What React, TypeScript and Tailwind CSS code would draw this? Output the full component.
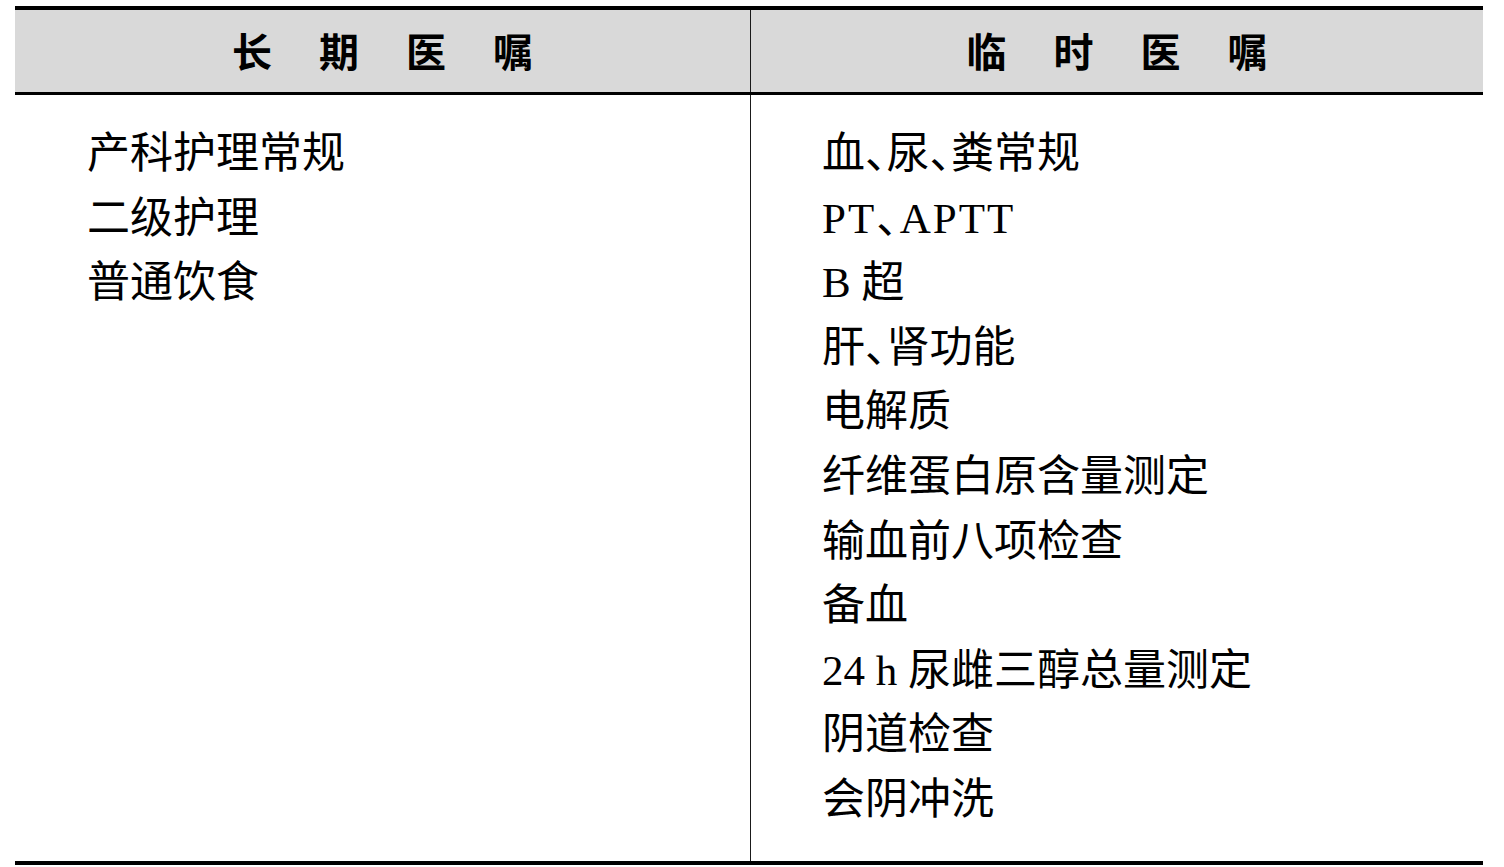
const longTerm = ['产科护理常规', '二级护理', '普通饮食']

const temporary = [
  '血、尿、粪常规',
  'PT、APTT',
  'B 超',
  '肝、肾功能',
  '电解质',
  '纤维蛋白原含量测定',
  '输血前八项检查',
  '备血',
  '24 h 尿雌三醇总量测定',
  '阴道检查',
  '会阴冲洗',
]

function HeaderCell({ text }: { text: string }) {
  return (
    <div className="flex h-full items-center justify-center gap-[47px] pt-[5px] text-[40px] font-bold leading-none text-black">
      {text.split('').map((ch, i) => (
        <span key={i}>{ch}</span>
      ))}
    </div>
  )
}

function ItemList({ items }: { items: string[] }) {
  // 'halt' sets the 、 half width, as in the printed table
  return (
    <ul className="pt-[27px] text-[43px] leading-[64.6px] text-black [font-feature-settings:'halt']">
      {items.map((item) => (
        <li key={item} className={item.startsWith('PT') ? 'whitespace-nowrap tracking-[2px]' : 'whitespace-nowrap'}>
          {item}
        </li>
      ))}
    </ul>
  )
}

export default function App() {
  return (
    <div
      className="h-[867px] w-[1504px] overflow-hidden bg-white pl-[15px] pt-[6px]"
      style={{ fontFamily: '"Liberation Serif", "Noto Sans CJK SC", serif' }}
    >
      <div className="w-[1468px] border-t-4 border-b-4 border-black">
        <div className="grid h-[85px] grid-cols-[736px_1fr] border-b-[3px] border-black bg-[#d9d9d9]">
          <div className="border-r-[1.5px] border-[#1a1a1a]">
            <HeaderCell text="长期医嘱" />
          </div>
          <div>
            <HeaderCell text="临时医嘱" />
          </div>
        </div>
        <div className="grid h-[766px] grid-cols-[736px_1fr]">
          <div className="border-r-[1.5px] border-[#1a1a1a] pl-[72px]">
            <ItemList items={longTerm} />
          </div>
          <div className="pl-[71px]">
            <ItemList items={temporary} />
          </div>
        </div>
      </div>
    </div>
  )
}
